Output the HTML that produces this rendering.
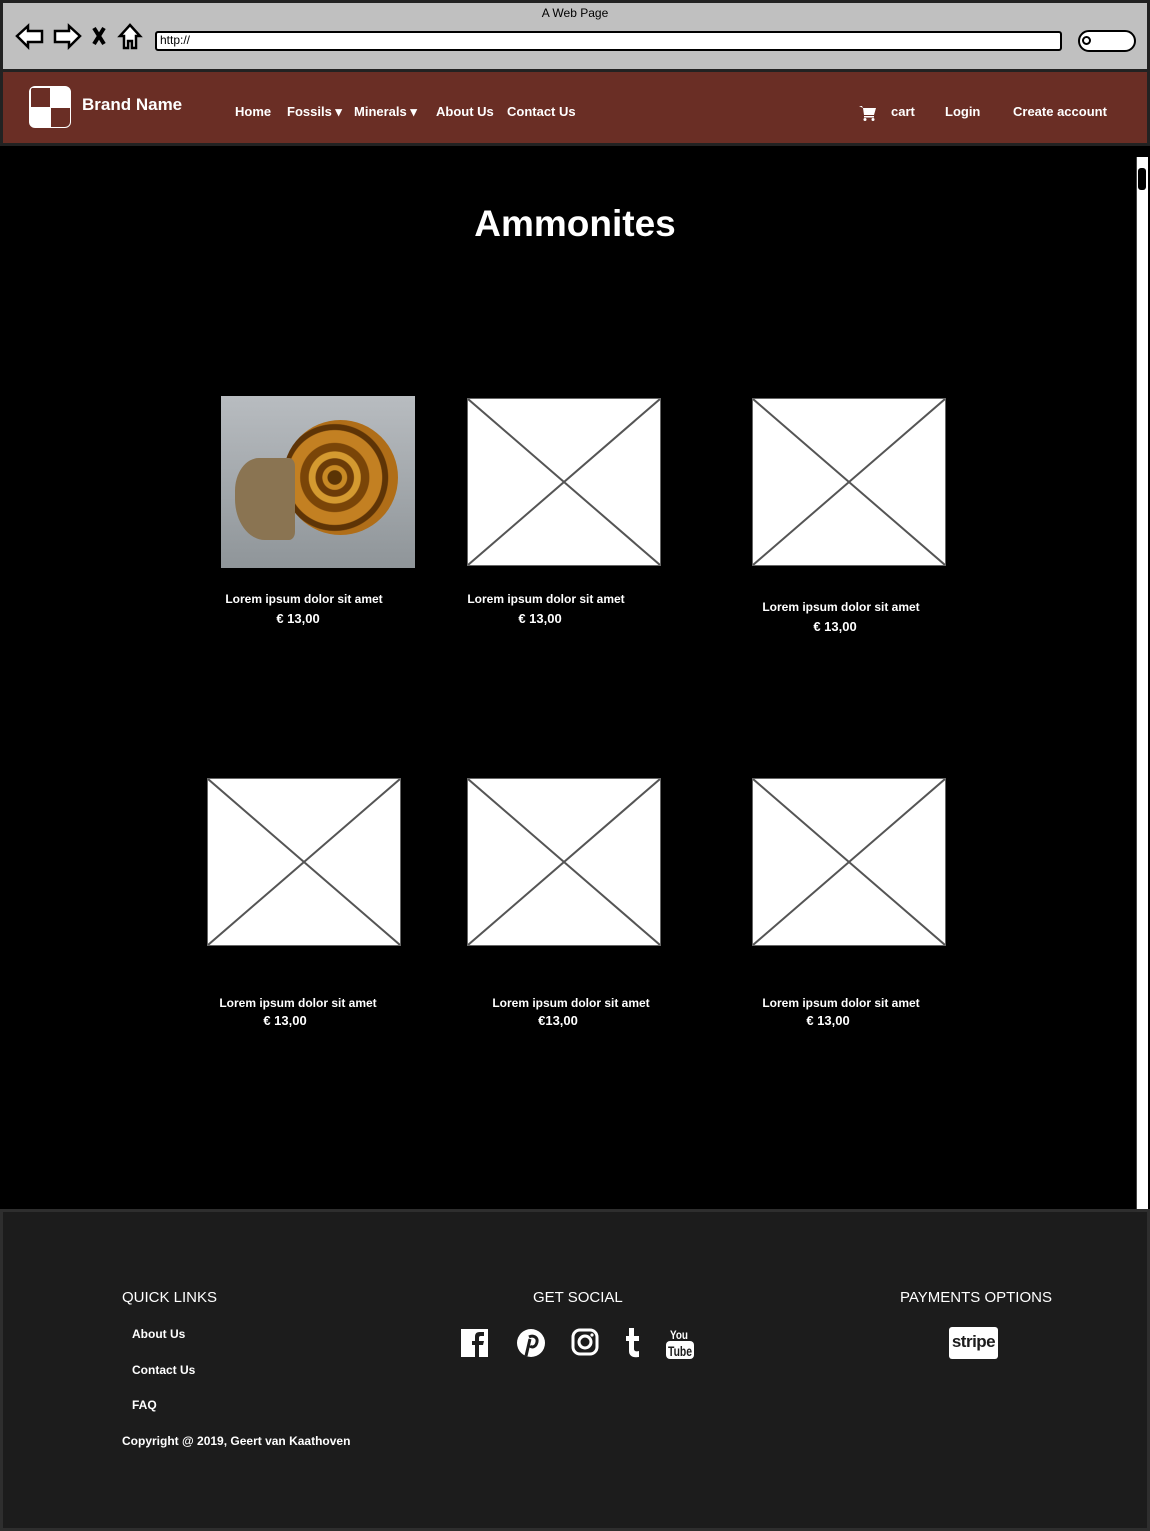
<!DOCTYPE html>
<html><head><meta charset="utf-8"><style>
*{margin:0;padding:0;box-sizing:border-box}
body{width:1150px;height:1531px;background:#000;position:relative;overflow:hidden;font-family:"Liberation Sans",sans-serif;color:#fff}
.a{position:absolute}
.chrome{left:0;top:0;width:1150px;height:72px;background:#c0c0c0;border:3px solid #222}
.nav{left:0;top:70px;width:1150px;height:76px;background:#6a2e25;border:3px solid #222;border-top:2px solid #222}
.nl{font-size:13px;font-weight:bold;top:104px;color:#fff}
.footer{left:0;top:1209px;width:1150px;height:322px;background:#1c1c1c;border:3px solid #2e2e2e}
.ph{background:#fff;border:1px solid #666}
.cap{font-size:12px;font-weight:bold;text-align:center;width:240px;line-height:20px}
.cap b{font-size:13px}
.fh{font-size:15px;top:1289px}
.fl{font-size:12px;font-weight:bold}
</style></head><body>
<div class="a chrome"></div>
<div class="a" style="left:0;top:6px;width:1150px;text-align:center;font-size:12px;color:#000">A Web Page</div>
<svg class="a" style="left:14px;top:22px" width="130" height="30" viewBox="0 0 130 30" fill="#fff" stroke="#000" stroke-width="2.5">
<path d="M3 14 L14 4 V9 H28 V20 H14 V25 Z"/>
<path d="M66 14 L55 4 V9 H41 V20 H55 V25 Z"/>
<path d="M80 6 L90 22 M90 6 L80 22" stroke-width="4"/>
<path d="M116 3 L106 14 H110 V26 H114 V19 H118 V26 H122 V14 H126 Z"/>
</svg>
<div class="a" style="left:155px;top:31px;width:907px;height:20px;background:#fff;border:2.5px solid #000;border-radius:3px;font-size:12px;color:#000;padding-left:3px;line-height:15px">http://</div>
<div class="a" style="left:1078px;top:30px;width:58px;height:22px;background:#fff;border:2.5px solid #000;border-radius:12px"></div>
<div class="a" style="left:1082px;top:36px;width:9px;height:9px;border:2px solid #000;border-radius:50%"></div>
<div class="a nav"></div>
<div class="a" style="left:29px;top:86px;width:42px;height:42px;background:#fff;border-radius:6px;overflow:hidden;border:1px solid #fff">
<div class="a" style="left:1px;top:1px;width:19px;height:19px;background:#6a2e25"></div>
<div class="a" style="left:21px;top:21px;width:19px;height:19px;background:#6a2e25"></div></div>
<div class="a" style="left:82px;top:95px;font-size:17px;font-weight:bold">Brand Name</div>
<div class="a nl" style="left:235px">Home</div>
<div class="a nl" style="left:287px">Fossils ▾</div>
<div class="a nl" style="left:354px">Minerals ▾</div>
<div class="a nl" style="left:436px">About Us</div>
<div class="a nl" style="left:507px">Contact Us</div>
<svg class="a" style="left:859px;top:106px" width="17" height="15" viewBox="0 0 17 15" fill="#fff"><path d="M0 0h3l1 2h13l-2 7H5l-1-7z M5 10h10v1.5H5z"/><circle cx="6" cy="13.5" r="1.5"/><circle cx="14" cy="13.5" r="1.5"/></svg>
<div class="a nl" style="left:891px">cart</div>
<div class="a nl" style="left:945px">Login</div>
<div class="a nl" style="left:1013px">Create account</div>
<div class="a" style="left:1136px;top:157px;width:12px;height:1052px;background:#fff;border-left:1px solid #444"></div>
<div class="a" style="left:1138px;top:168px;width:8px;height:22px;background:#000;border-radius:3px"></div>
<div class="a" style="left:0;top:203px;width:1150px;text-align:center;font-size:37px;font-weight:bold">Ammonites</div>
<div class="a" style="left:221px;top:396px;width:194px;height:172px;background:linear-gradient(#b8bcc0,#8f9599)">
<div class="a" style="left:62px;top:24px;width:115px;height:115px;border-radius:50%;background:radial-gradient(circle at 45% 50%,#5a3405 0 8%,#c88a25 9% 14%,#6b3b08 15% 22%,#d49a30 23% 30%,#7a4508 31% 40%,#c38022 41% 55%,#5e3406 56% 62%,#b06e18 63% 100%)"></div>
<div class="a" style="left:14px;top:62px;width:60px;height:82px;border-radius:40% 10% 10% 50%;background:#8a7452"></div>
</div>
<div class="a ph" style="left:467px;top:398px;width:194px;height:168px"><svg width="192" height="166"><path d="M0 0L192 166M192 0L0 166" stroke="#555" stroke-width="2"/></svg></div>
<div class="a ph" style="left:752px;top:398px;width:194px;height:168px"><svg width="192" height="166"><path d="M0 0L192 166M192 0L0 166" stroke="#555" stroke-width="2"/></svg></div>
<div class="a ph" style="left:207px;top:778px;width:194px;height:168px"><svg width="192" height="166"><path d="M0 0L192 166M192 0L0 166" stroke="#555" stroke-width="2"/></svg></div>
<div class="a ph" style="left:467px;top:778px;width:194px;height:168px"><svg width="192" height="166"><path d="M0 0L192 166M192 0L0 166" stroke="#555" stroke-width="2"/></svg></div>
<div class="a ph" style="left:752px;top:778px;width:194px;height:168px"><svg width="192" height="166"><path d="M0 0L192 166M192 0L0 166" stroke="#555" stroke-width="2"/></svg></div>
<div class="a cap" style="left:184px;top:589px">Lorem ipsum dolor sit amet<br><b style="margin-left:-12px">€ 13,00</b></div>
<div class="a cap" style="left:426px;top:589px">Lorem ipsum dolor sit amet<br><b style="margin-left:-12px">€ 13,00</b></div>
<div class="a cap" style="left:721px;top:597px">Lorem ipsum dolor sit amet<br><b style="margin-left:-12px">€ 13,00</b></div>
<div class="a cap" style="left:178px;top:994px;line-height:18px">Lorem ipsum dolor sit amet<br><b style="margin-left:-26px">€ 13,00</b></div>
<div class="a cap" style="left:451px;top:994px;line-height:18px">Lorem ipsum dolor sit amet<br><b style="margin-left:-26px">€13,00</b></div>
<div class="a cap" style="left:721px;top:994px;line-height:18px">Lorem ipsum dolor sit amet<br><b style="margin-left:-26px">€ 13,00</b></div>
<div class="a footer"></div>
<div class="a fh" style="left:122px">QUICK LINKS</div>
<div class="a fh" style="left:533px">GET SOCIAL</div>
<div class="a fh" style="left:900px">PAYMENTS OPTIONS</div>
<div class="a fl" style="left:132px;top:1327px">About Us</div>
<div class="a fl" style="left:132px;top:1363px">Contact Us</div>
<div class="a fl" style="left:132px;top:1398px">FAQ</div>
<div class="a fl" style="left:122px;top:1434px">Copyright @ 2019, Geert van Kaathoven</div>
<svg class="a" style="left:460px;top:1326px" width="240" height="34" viewBox="0 0 240 34">
<rect x="1" y="3" width="27" height="28" fill="#fff"/><path d="M19 31V19h4l1-4h-5v-3c0-1.5.5-2 2-2h3V6h-4c-4 0-5 2-5 5v4h-3v4h3v12z" fill="#1c1c1c"/>
<circle cx="71" cy="17" r="14" fill="#fff"/><path d="M69 11c4-2 9 0 8 5s-5 6-7 4M70 13l-4 17" stroke="#1c1c1c" stroke-width="3" fill="none"/>
<rect x="113" y="4" width="24" height="24" rx="7" fill="none" stroke="#fff" stroke-width="3"/><circle cx="125" cy="16" r="6" fill="none" stroke="#fff" stroke-width="3"/><circle cx="132" cy="9" r="1.6" fill="#fff"/>
<path d="M169 2h5v8h5v5h-5v8c0 2 2 3 5 2v6c-6 1-10-1-10-6v-10h-3v-5h3z" fill="#fff"/>
<text x="210" y="13" font-size="12" font-weight="bold" fill="#fff" textLength="18" lengthAdjust="spacingAndGlyphs">You</text>
<rect x="206" y="15" width="28" height="18" rx="4" fill="#fff"/><text x="208" y="30" font-size="14" font-weight="bold" fill="#1c1c1c" textLength="24" lengthAdjust="spacingAndGlyphs">Tube</text>
</svg>
<div class="a" style="left:949px;top:1327px;width:49px;height:32px;background:#fff;border-radius:3px;color:#1c1c1c;font-weight:bold;font-size:17px;text-align:center;line-height:30px;letter-spacing:-0.5px">stripe</div>
</body></html>
